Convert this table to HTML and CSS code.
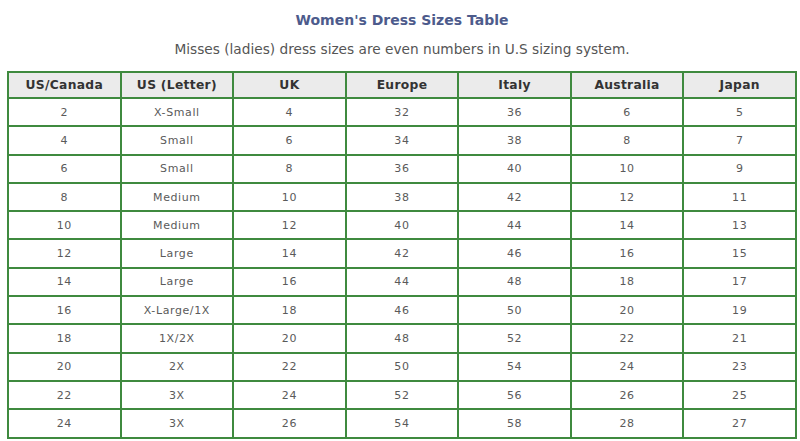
FILE: index.html
```html
<!DOCTYPE html>
<html>
<head>
<meta charset="utf-8">
<link rel="stylesheet" href="styles.css">
</head>
<body>
<div class="page">
  <h1 class="title">Women's Dress Sizes Table</h1>
  <p class="subtitle">Misses (ladies) dress sizes are even numbers in U.S sizing system.</p>
  <table class="sizes">
    <thead>
      <tr><th>US/Canada</th><th>US (Letter)</th><th>UK</th><th>Europe</th><th>Italy</th><th>Australia</th><th>Japan</th></tr>
    </thead>
    <tbody>
      <tr><td>2</td><td>X-Small</td><td>4</td><td>32</td><td>36</td><td>6</td><td>5</td></tr>
      <tr><td>4</td><td>Small</td><td>6</td><td>34</td><td>38</td><td>8</td><td>7</td></tr>
      <tr><td>6</td><td>Small</td><td>8</td><td>36</td><td>40</td><td>10</td><td>9</td></tr>
      <tr><td>8</td><td>Medium</td><td>10</td><td>38</td><td>42</td><td>12</td><td>11</td></tr>
      <tr><td>10</td><td>Medium</td><td>12</td><td>40</td><td>44</td><td>14</td><td>13</td></tr>
      <tr><td>12</td><td>Large</td><td>14</td><td>42</td><td>46</td><td>16</td><td>15</td></tr>
      <tr><td>14</td><td>Large</td><td>16</td><td>44</td><td>48</td><td>18</td><td>17</td></tr>
      <tr><td>16</td><td>X-Large/1X</td><td>18</td><td>46</td><td>50</td><td>20</td><td>19</td></tr>
      <tr><td>18</td><td>1X/2X</td><td>20</td><td>48</td><td>52</td><td>22</td><td>21</td></tr>
      <tr><td>20</td><td>2X</td><td>22</td><td>50</td><td>54</td><td>24</td><td>23</td></tr>
      <tr><td>22</td><td>3X</td><td>24</td><td>52</td><td>56</td><td>26</td><td>25</td></tr>
      <tr><td>24</td><td>3X</td><td>26</td><td>54</td><td>58</td><td>28</td><td>27</td></tr>
    </tbody>
  </table>
</div>
</body>
</html>
```
FILE: styles.css
```css
html, body {
  margin: 0;
  padding: 0;
  background: #ffffff;
}
body {
  font-family: "DejaVu Sans", Verdana, sans-serif;
}
.page {
  padding: 11px 3px 0 7px;
}
.title {
  margin: 0;
  text-align: center;
  font-size: 14px;
  line-height: 18px;
  font-weight: bold;
  color: #4d5b8c;
}
.subtitle {
  margin: 11px 0 0 0;
  text-align: center;
  font-size: 13.7px;
  line-height: 18px;
  color: #555555;
}
.sizes {
  margin-top: 13px;
  width: 790px;
  border-collapse: collapse;
  table-layout: fixed;
  border: 2px solid #4f9a4f;
}
.sizes th, .sizes td {
  border: 2px solid #3f8a3f;
  text-align: center;
  padding: 0;
}
.sizes th {
  height: 24px;
  background: #ebebeb;
  color: #333333;
  font-size: 12.3px;
  letter-spacing: 0.3px;
  font-weight: bold;
}
.sizes td {
  height: 26.3px;
  color: #5a5a5a;
  font-size: 11px;
  letter-spacing: 0.6px;
}
```
